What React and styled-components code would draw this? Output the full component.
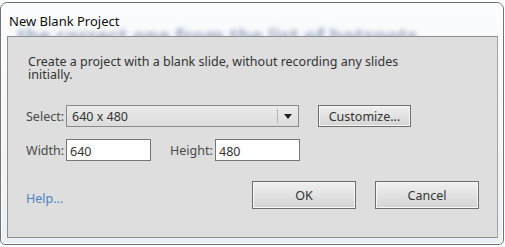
import React, { useState } from "react";
import styled, { createGlobalStyle } from "styled-components";

const GlobalStyle = createGlobalStyle`
  html, body {
    margin: 0;
    padding: 0;
    background: #ffffff;
  }
  body {
    font-family: "Noto Sans", "Open Sans", sans-serif;
  }
`;

const SIZES = ["640 x 480", "800 x 600", "1024 x 768", "1280 x 720"];

const App = () => {
  const [size, setSize] = useState(SIZES[0]);
  const [width, height] = size.split(" x ");

  return (
    <>
      <GlobalStyle />
      <Window>
        <TitleBar>
          <Title>New Blank Project</Title>
        </TitleBar>
        <Panel>
          <Description>
            Create a project with a blank slide, without recording any slides
            <br />
            initially.
          </Description>

          <Row>
            <Label width={40}>Select:</Label>
            <SelectBox>
              <SelectValue>{size}</SelectValue>
              <ArrowCell onClick={() => setSize(SIZES[(SIZES.indexOf(size) + 1) % SIZES.length])}>
                <svg width="8" height="5" viewBox="0 0 8 5">
                  <path d="M0 0 L8 0 L4 5 Z" fill="#1e1e1e" />
                </svg>
              </ArrowCell>
            </SelectBox>
            <SmallButton>Customize...</SmallButton>
          </Row>

          <Row>
            <Label width={40}>Width:</Label>
            <Field defaultValue={width} key={`w-${width}`} />
            <Label width={45} indent={19}>Height:</Label>
            <Field defaultValue={height} key={`h-${height}`} />
          </Row>

          <Footer>
            <HelpLink href="#">Help...</HelpLink>
            <Buttons>
              <BigButton>OK</BigButton>
              <BigButton>Cancel</BigButton>
            </Buttons>
          </Footer>
        </Panel>
      </Window>
    </>
  );
};

const Window = styled.div`
  box-sizing: border-box;
  width: 504px;
  height: 243px;
  margin-top: 2px;
  border: 1px solid #6f7378;
  border-radius: 7px 7px 5px 5px;
  background: linear-gradient(180deg, #fbfcfd 0%, #f4f6f8 60%, #e9f1f5 100%);
  box-shadow: inset 0 0 0 1px #ffffff;
  padding: 0 5px 6px 6px;
  display: flex;
  flex-direction: column;
`;

const TitleBar = styled.div`
  position: relative;
  height: 33px;
  flex-shrink: 0;
  overflow: hidden;

  &::before {
    content: "the correct one from the list of hotspots";
    position: absolute;
    left: 10px;
    top: 26px;
    white-space: nowrap;
    font-family: "Open Sans", sans-serif;
    font-weight: 700;
    font-size: 20px;
    line-height: 14px;
    color: #4a6190;
    opacity: 0.55;
    filter: blur(2.6px);
  }
`;

const Title = styled.div`
  position: relative;
  padding: 10px 0 0 2px;
  font-family: "Noto Sans", "Open Sans", sans-serif;
  font-size: 13px;
  line-height: 16px;
  color: #0f0f0f;
`;

const Panel = styled.div`
  flex: 1;
  box-sizing: border-box;
  border: 1px solid #8e8e8e;
  border-right-color: #a2a2a2;
  background: #dedede;
  padding: 18px 18px 0 18px;
  display: flex;
  flex-direction: column;
  color: #3a3a3a;
  font-size: 12.5px;
`;

const Description = styled.p`
  margin: 0 0 24px 2px;
  line-height: 13px;
  color: #333333;
`;

const Row = styled.div`
  display: flex;
  align-items: center;
  height: 22px;
  margin-bottom: 12px;
`;

const Label = styled.span`
  width: ${(p) => p.width}px;
  margin-left: ${(p) => p.indent || 0}px;
  color: #4a4a4a;
  flex-shrink: 0;
`;

const SelectBox = styled.div`
  box-sizing: border-box;
  width: 233px;
  height: 22px;
  border: 1px solid #8a8a8a;
  background: linear-gradient(180deg, #ebebeb 0%, #dcdcdc 100%);
  display: flex;
  align-items: stretch;
`;

const SelectValue = styled.span`
  flex: 1;
  display: flex;
  align-items: center;
  padding-left: 5px;
  color: #333333;
`;

const ArrowCell = styled.span`
  width: 20px;
  display: flex;
  align-items: center;
  justify-content: center;
  border-left: 1px solid #b4b4b4;
  margin: 3px 0;
  cursor: pointer;
`;

const buttonLook = `
  box-sizing: border-box;
  border: 1px solid #6e6e6e;
  background: linear-gradient(180deg, #f0f0f0 0%, #e2e2e2 50%, #d4d4d4 100%);
  box-shadow: inset 0 0 0 1px #f7f7f7;
  font-family: "Noto Sans", "Open Sans", sans-serif;
  color: #333333;
  padding: 0;
  cursor: pointer;
`;

const SmallButton = styled.button`
  ${buttonLook}
  margin-left: 19px;
  width: 93px;
  height: 22px;
  font-size: 12.5px;
`;

const Field = styled.input`
  box-sizing: border-box;
  width: 85px;
  height: 22px;
  border: 1px solid #777777;
  background: #ffffff;
  padding: 2px 0 0 3px;
  font-family: "Noto Sans", "Open Sans", sans-serif;
  font-size: 12.5px;
  color: #333333;
  outline: none;
`;

const Footer = styled.div`
  display: flex;
  align-items: center;
  justify-content: space-between;
  margin-top: 8px;
`;

const HelpLink = styled.a`
  color: #4b83c4;
  text-decoration: none;
  margin-top: 6px;
`;

const Buttons = styled.div`
  display: flex;
  gap: 19px;
`;

const BigButton = styled.button`
  ${buttonLook}
  width: 104px;
  height: 28px;
  font-size: 12.5px;
`;

export default App;
